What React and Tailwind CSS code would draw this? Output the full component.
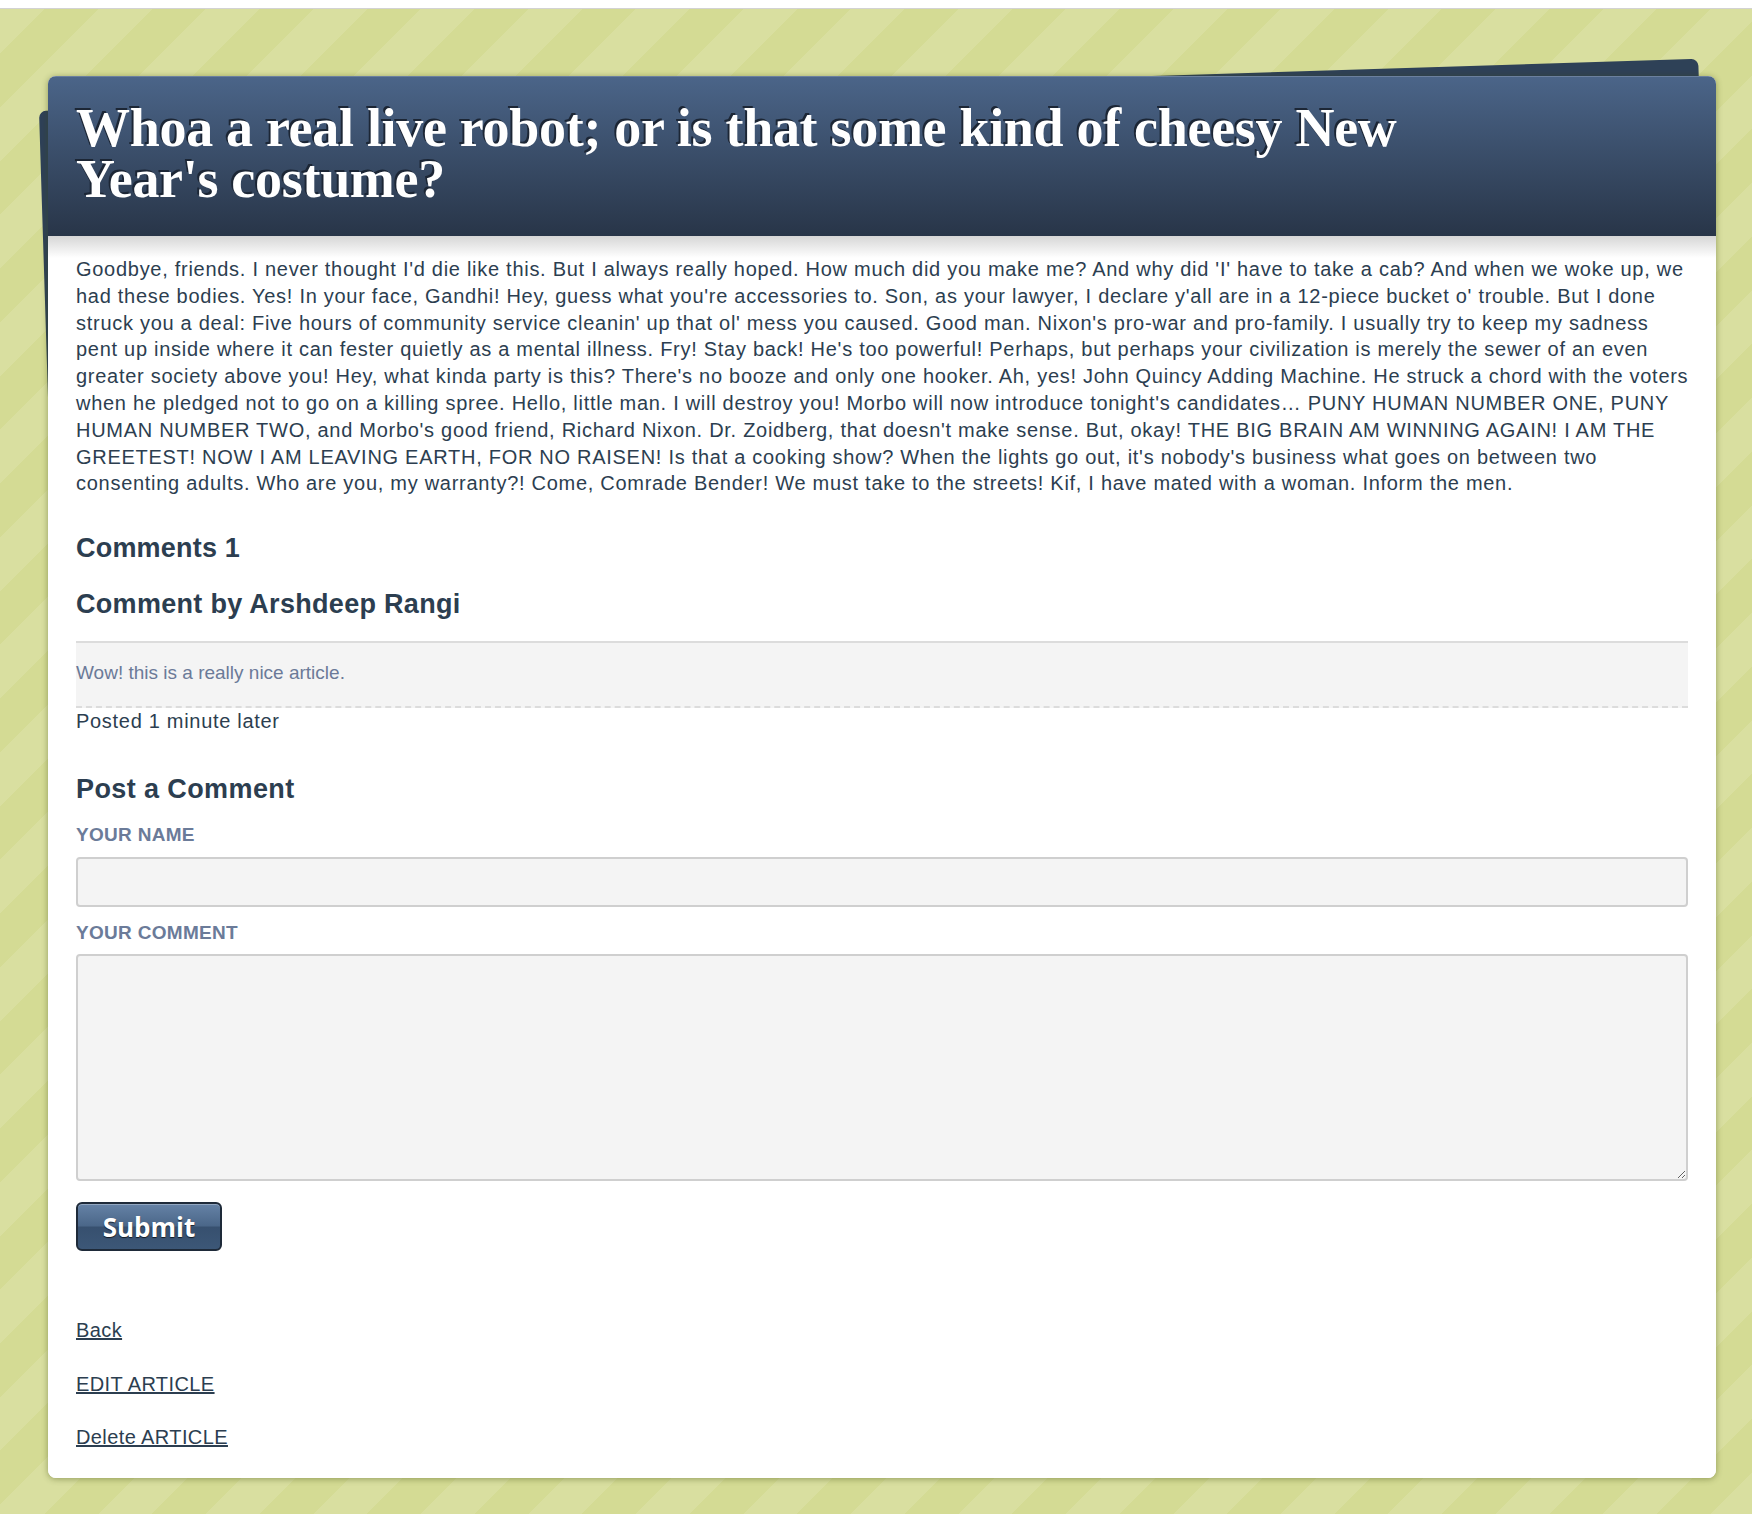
import React from 'react';

// article body, broken where the reference breaks its lines
const bodyLines = [
  "Goodbye, friends. I never thought I'd die like this. But I always really hoped. How much did you make me? And why did 'I' have to take a cab? And when we woke up, we",
  "had these bodies. Yes! In your face, Gandhi! Hey, guess what you're accessories to. Son, as your lawyer, I declare y'all are in a 12-piece bucket o' trouble. But I done",
  "struck you a deal: Five hours of community service cleanin' up that ol' mess you caused. Good man. Nixon's pro-war and pro-family. I usually try to keep my sadness",
  "pent up inside where it can fester quietly as a mental illness. Fry! Stay back! He's too powerful! Perhaps, but perhaps your civilization is merely the sewer of an even",
  "greater society above you! Hey, what kinda party is this? There's no booze and only one hooker. Ah, yes! John Quincy Adding Machine. He struck a chord with the voters",
  "when he pledged not to go on a killing spree. Hello, little man. I will destroy you! Morbo will now introduce tonight's candidates\u2026 PUNY HUMAN NUMBER ONE, PUNY",
  "HUMAN NUMBER TWO, and Morbo's good friend, Richard Nixon. Dr. Zoidberg, that doesn't make sense. But, okay! THE BIG BRAIN AM WINNING AGAIN! I AM THE",
  "GREETEST! NOW I AM LEAVING EARTH, FOR NO RAISEN! Is that a cooking show? When the lights go out, it's nobody's business what goes on between two",
  "consenting adults. Who are you, my warranty?! Come, Comrade Bender! We must take to the streets! Kif, I have mated with a woman. Inform the men.",
];

const App = () => {
  return (
    <div className="min-h-[1514px] bg-[#d4db94] bg-[repeating-linear-gradient(135deg,#d9dfa0_0px,#d9dfa0_38px,#d4db94_38px,#d4db94_76px)] pb-[36px] font-['Liberation_Sans',Arial,sans-serif] text-[#2c3e50]">
      <div className="h-[9px] border-b border-[#d2d2d2] bg-white" />

      <div className="relative ml-[48px] mt-[67px] w-[1668px]">
        {/* sheet peeking out from behind the card */}
        <div className="absolute left-[-9px] top-[35px] h-[500px] w-[1660px] origin-top-left rotate-[-1.8deg] rounded-[7px] bg-[#2e4157]" />

        <article className="relative overflow-hidden rounded-[8px] bg-white shadow-[0_1px_6px_rgba(60,70,10,0.45)]">
          <header className="h-[160px] bg-[linear-gradient(to_bottom,#4b6589,#283548)] pl-[28px] pt-[27px] shadow-[inset_0_1px_0_rgba(255,255,255,0.18)]">
            <h1 className="font-['Liberation_Serif','Times_New_Roman',serif] text-[54px] font-bold leading-[51px] tracking-[-0.3px] text-white [text-shadow:-2px_-2px_0_#1c2635]">
              Whoa a real live robot; or is that some kind of cheesy New
              <br />
              Year's costume?
            </h1>
          </header>

          <div className="bg-[linear-gradient(to_bottom,#d6d6d6_0px,#ffffff_22px)] pb-[27px] pl-[28px] pr-[28px] pt-[20px]">
            <p className="text-[20px] leading-[26.8px] tracking-[0.72px]">
              {bodyLines.map((line, i) => (
                <span key={i} className="block whitespace-nowrap">{line}</span>
              ))}
            </p>

            <h3 className="mt-[35px] text-[27px] font-bold leading-[32px] tracking-[0.2px]">Comments 1</h3>
            <h3 className="mt-[24px] text-[27px] font-bold leading-[32px] tracking-[0.3px]">Comment by Arshdeep Rangi</h3>

            <div className="mt-[21px] border-b-2 border-t-2 border-dashed border-[#dcdcdc] bg-[#f4f4f4] pb-[20px] pt-[17px] [border-top-style:solid]">
              <p className="text-[19px] leading-[26px] text-[#6b7a98]">Wow! this is a really nice article.</p>
            </div>
            <p className="text-[20px] leading-[27px] tracking-[0.7px]">Posted 1 minute later</p>

            <h3 className="mt-[38px] text-[27px] font-bold leading-[32px] tracking-[0.4px]">Post a Comment</h3>
            <form onSubmit={(e) => e.preventDefault()}>
              <label className="mb-[11px] mt-[19px] block text-[19px] font-bold uppercase leading-[22px] tracking-[0.3px] text-[#6b7b99]">
                Your Name
              </label>
              <input type="text" className="block h-[50px] w-full rounded-[4px] border-2 border-[#cfcfcf] bg-[#f4f4f4] px-2 text-[18px] outline-none" />
              <label className="mb-[10px] mt-[15px] block text-[19px] font-bold uppercase leading-[22px] tracking-[0.3px] text-[#6b7b99]">
                Your Comment
              </label>
              <textarea className="block h-[227px] w-full rounded-[4px] border-2 border-[#cfcfcf] bg-[#f4f4f4] p-2 text-[18px] outline-none" />
              <button
                type="submit"
                className="mt-[21px] block h-[49px] w-[146px] rounded-[6px] border-2 border-[#1e2a39] bg-[linear-gradient(to_bottom,#6582a6_0%,#4b6789_48%,#37506f_52%,#3c5777_100%)] font-['Open_Sans',sans-serif] text-[26px] font-bold leading-none text-white shadow-[inset_0_1px_0_rgba(255,255,255,0.3)] [text-shadow:0_1px_1px_rgba(0,0,0,0.7)]"
              >
                Submit
              </button>
            </form>

            <div className="mt-[66px] text-[20px] leading-[27px] tracking-[0.4px]">
              <p><a href="#" className="underline">Back</a></p>
              <p className="mt-[27px]"><a href="#" className="underline">EDIT ARTICLE</a></p>
              <p className="mt-[26px]"><a href="#" className="underline">Delete ARTICLE</a></p>
            </div>
          </div>
        </article>
      </div>
    </div>
  );
};

export default App;
